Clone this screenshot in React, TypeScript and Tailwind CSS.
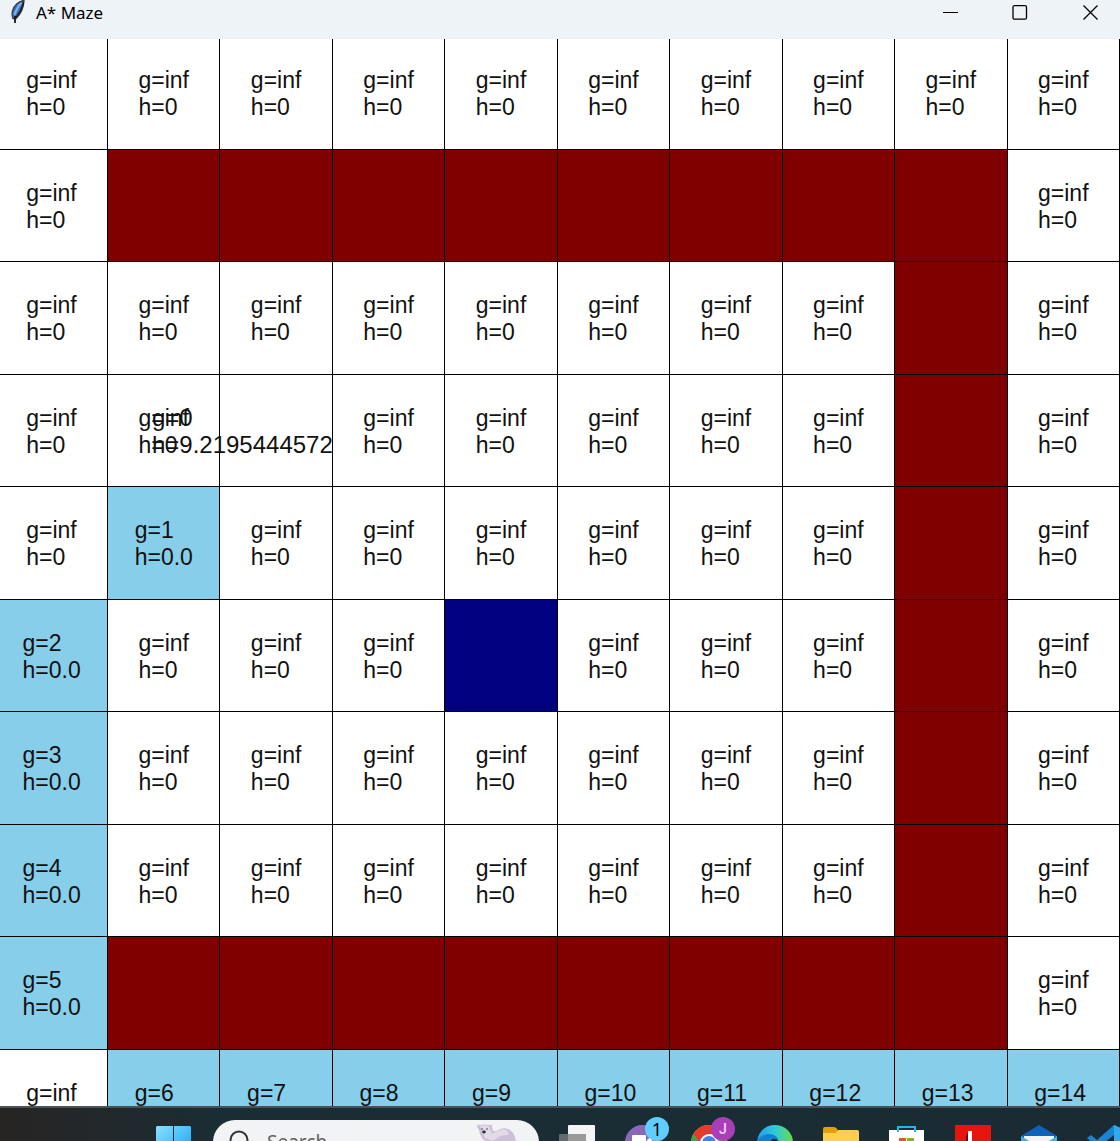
import React from "react";

type Kind = "open" | "wall" | "path" | "goal" | "start" | "blank";
type Cell = { kind: Kind; g?: string };

const layout = [
  ". . . . . . . . . .",
  ". # # # # # # # # .",
  ". . . . . . . . # .",
  ". S _ . . . . . # .",
  ". 1 . . . . . . # .",
  "2 . . . G . . . # .",
  "3 . . . . . . . # .",
  "4 . . . . . . . # .",
  "5 # # # # # # # # .",
  ". 6 7 8 9 10 11 12 13 14",
];

const toCell = (token: string): Cell => {
  if (token === ".") return { kind: "open" };
  if (token === "_") return { kind: "blank" };
  if (token === "#") return { kind: "wall" };
  if (token === "G") return { kind: "goal" };
  if (token === "S") return { kind: "start" };
  return { kind: "path", g: token };
};

const fills: Record<Kind, string> = {
  open: "bg-white",
  start: "bg-white",
  blank: "bg-white",
  wall: "bg-[#800000]",
  path: "bg-[#87ceeb]",
  goal: "bg-[#000080]",
};

function MazeCell({ cell, row, first, last }: { cell: Cell; row: number; first: boolean; last: boolean }) {
  const hasText = cell.kind === "open" || cell.kind === "path" || cell.kind === "start";
  return (
    <div
      className={`relative flex items-start justify-center border-r border-black ${fills[cell.kind]} ${
        row === 0 ? "pt-7" : "pt-[30px]"
      } ${first ? "pr-1" : ""} ${last ? "" : "border-b"}`}
    >
      {hasText && (
        <p className={cell.kind === "path" ? "w-[58px]" : ""}>
          g={cell.g ?? "inf"}
          {!last && (
            <>
              <br />
              h={cell.kind === "path" ? "0.0" : "0"}
            </>
          )}
        </p>
      )}
      {cell.kind === "start" && (
        <p className="absolute left-11 top-[29px] z-10 text-[24px]">
          g=0
          <br />
          h=9.2195444572
        </p>
      )}
    </div>
  );
}

function Feather() {
  return (
    <svg viewBox="0 0 16 24" className="h-6 w-4" aria-hidden="true">
      <path d="M14 .5C9 1 4 5 2.500 11c-.7 3-.5 5 .5 7.500l3 0C11 14 13.500 8 14 .5Z" fill="#3b78c4" stroke="#3a3f47" strokeWidth="1.400" />
      <path d="M11.500 3C8 6 6 10 4.500 15" fill="none" stroke="#7fb4ea" strokeWidth="2" />
      <path d="M13.500 2C12 9 9 14 5.500 18" fill="none" stroke="#1d2126" strokeWidth="1.600" />
      <path d="M5 16v7" fill="none" stroke="#15171a" strokeWidth="1.800" />
    </svg>
  );
}

function TitleBar() {
  return (
    <header className="flex h-[39px] items-start justify-between border-b border-[#f0f0f0] bg-[#eef3f8] pl-[10px] text-black">
      <div className="flex items-start gap-[10px]">
        <Feather />
        <h1 className="font-['Noto_Sans',sans-serif] text-[17px] leading-[26px]">A* Maze</h1>
      </div>
      <div className="flex pr-[21px]">
        <button aria-label="Minimize" className="mr-[53px] h-[26px] w-4">
          <svg viewBox="0 0 16 26" fill="none" stroke="currentColor"><path d="M0 12.500h15" /></svg>
        </button>
        <button aria-label="Maximize" className="mr-[55px] h-[26px] w-4">
          <svg viewBox="0 0 16 26" fill="none" stroke="currentColor" strokeWidth="1.300"><rect x="1" y="5.700" width="13.500" height="13.500" rx="1.500" /></svg>
        </button>
        <button aria-label="Close" className="h-[26px] w-4">
          <svg viewBox="0 0 16 26" fill="none" stroke="currentColor" strokeWidth="1.300"><path d="M.5 5.500l14 14M14.500 5.500l-14 14" /></svg>
        </button>
      </div>
    </header>
  );
}

const icon = "h-9 w-9";

function WindowsIcon() {
  return (
    <svg viewBox="0 0 36 36" className={icon}>
      <defs>
        <linearGradient id="win" x1="0" y1="0" x2="1" y2="1">
          <stop stopColor="#8be0ff" />
          <stop offset="1" stopColor="#0aa0f5" />
        </linearGradient>
      </defs>
      <path d="M1 0h16v17H0V1ZM18 0h16l1 1v16H18ZM0 18h17v17H1ZM18 18h17v17H18Z" fill="url(#win)" />
    </svg>
  );
}

function TaskViewIcon() {
  return (
    <svg viewBox="0 0 36 36" className={icon}>
      <rect x="9" y="0" width="27" height="27" rx="1" fill="#f4f4f4" />
      <rect x="0" y="9" width="27" height="27" rx="1" fill="#666b6d" />
      <rect x="9" y="9" width="18" height="18" fill="#9a9a9a" />
    </svg>
  );
}

function ChatIcon() {
  return (
    <svg viewBox="0 0 36 36" className={icon}>
      <circle cx="18" cy="18" r="18" fill="#8064b8" />
      <path d="M0 18A18 18 0 0 1 18 0a18 18 0 0 1 16 10L8 34A18 18 0 0 1 0 18Z" fill="#8a68b8" />
      <rect x="7" y="10" width="14" height="14" rx="1" fill="#fff" />
      <path d="M22 15l5-4v13l-5-4Z" fill="#fff" />
    </svg>
  );
}

function ChromeIcon() {
  return (
    <svg viewBox="0 0 36 36" className={icon}>
      <circle cx="18" cy="18" r="18" fill="#fbc116" />
      <path d="M2.400 9A18 18 0 0 1 33.600 9H18l-8 13Z" fill="#e33b2e" />
      <path d="M2.400 9A18 18 0 0 0 18 36l8-13-16-1Z" fill="#2da94f" />
      <circle cx="18" cy="18" r="9" fill="#fff" />
      <circle cx="18" cy="18" r="7" fill="#3f83f4" />
    </svg>
  );
}

function EdgeIcon() {
  return (
    <svg viewBox="0 0 36 36" className={icon}>
      <defs>
        <linearGradient id="edge">
          <stop stopColor="#229fe3" />
          <stop offset=".5" stopColor="#32c7dc" />
          <stop offset="1" stopColor="#65df45" />
        </linearGradient>
      </defs>
      <path d="M0 17C1 6 9 0 18 0c10 0 18 8 18 17 0 7-5 10-14 9l-2-9Z" fill="url(#edge)" />
      <path d="M0 18C1 12 7 9 12 9c6 0 10 4 10 9-8-6-12 3-5 16C7 34 0 27 0 18Z" fill="#1182cf" />
      <path d="M13 18c1-5 7-6 9 0v7h-7Z" fill="#172d38" />
    </svg>
  );
}

function FolderIcon() {
  return (
    <svg viewBox="0 0 36 36" className={icon}>
      <path d="M0 4q0-2 2-2h9q2 0 4 3l3 2v8H0Z" fill="#dfa00d" />
      <path d="M0 8h12l4-3h18q2 0 2 2v24H0Z" fill="#ffcf4c" />
    </svg>
  );
}

function StoreIcon() {
  return (
    <svg viewBox="0 0 36 36" className={icon}>
      <path d="M0 5h35v27q0 2-2 2H2q-2 0-2-2Z" fill="#fff" />
      <path d="M9 7V2h17v5" fill="none" stroke="#27b5ed" strokeWidth="2" />
      <path d="M10 13h7v7h-7Z" fill="#f25022" />
      <path d="M18 13h7v7h-7Z" fill="#7fba00" />
      <path d="M10 21h7v7h-7Z" fill="#00a4ef" />
      <path d="M18 21h7v7h-7Z" fill="#ffb900" />
    </svg>
  );
}

function RedIcon() {
  return (
    <svg viewBox="0 0 36 36" className={icon}>
      <path d="M0 0h36v36H0Z" fill="#e6150d" />
      <path d="M11 12l2-5v22h-2Z" fill="#6d0a06" />
      <path d="M13 6h4v18h7v4H13Z" fill="#fff" />
    </svg>
  );
}

function MailIcon() {
  return (
    <svg viewBox="0 0 36 36" className={icon}>
      <path d="M0 11L18 0l18 11v23H0Z" fill="#0f62ba" />
      <path d="M3 11h30v13H3Z" fill="#f4f4f4" />
      <path d="M0 11l18 11 18-11v23H0Z" fill="#36b6ef" />
    </svg>
  );
}

function CodeIcon() {
  return (
    <svg viewBox="0 0 36 36" className={icon}>
      <path d="M27 0L10 15 4 10l-4 3 22 20 5 3 9-4V4Z" fill="#1686d2" />
      <path d="M27 10v16l-10-8Z" fill="#182d37" />
      <path d="M27 0l9 4v28l-9 4Z" fill="#36a8ed" />
    </svg>
  );
}

function Bear() {
  return (
    <svg viewBox="0 0 40 36" className="h-9 w-10 shrink-0" aria-hidden="true">
      <path d="M0 3Q0 0 3 1q5-1 9 0 4-1 3 2l1 4 3 0q8-5 14-1 6 4 6 14v12H8V17Q3 13 2 6Z" fill="#cdbfd8" />
      <path d="M3 2q5-1 9 0l3 8q8-6 15-4l2 5q-9-1-16 6l-8-3Z" fill="#e3dae9" />
      <circle cx="5" cy="5" r=".8" fill="#40394b" />
      <circle cx="10" cy="5" r=".8" fill="#40394b" />
      <ellipse cx="7" cy="8" rx="1.800" ry="1.400" fill="#302c39" />
    </svg>
  );
}

type AppEntry = { name: string; Icon: () => React.JSX.Element; badge?: string; tint?: string };
const apps: AppEntry[] = [
  { name: "Task view", Icon: TaskViewIcon },
  { name: "Chat", Icon: ChatIcon, badge: "1", tint: "bg-[#60cdff] text-black text-[18px]" },
  { name: "Chrome", Icon: ChromeIcon, badge: "J", tint: "bg-[#a93fb8] text-[#eed5f2] text-[14px] font-['Roboto',sans-serif] font-medium" },
  { name: "Edge", Icon: EdgeIcon },
  { name: "File Explorer", Icon: FolderIcon },
  { name: "Microsoft Store", Icon: StoreIcon },
  { name: "Reader", Icon: RedIcon },
  { name: "Mail", Icon: MailIcon },
  { name: "Code", Icon: CodeIcon },
];

function Taskbar() {
  return (
    <nav className="flex h-[35px] items-start overflow-hidden border-t-2 border-[#4b5256] bg-linear-to-r from-[#272423] via-[#1a2d35] via-20% to-[#1a2b33] pl-[156px] font-['Noto_Sans',sans-serif]">
      <button aria-label="Start" className="mt-[18px] shrink-0">
        <WindowsIcon />
      </button>
      <label className="ml-[21px] mr-5 mt-3 flex h-11 w-[326px] shrink-0 items-center rounded-full bg-[#f2f3f4] pl-4 pr-[22px]">
        <svg viewBox="0 0 24 24" className="mr-[14px] h-6 w-6 shrink-0" fill="none" stroke="#333" strokeWidth="2" aria-hidden="true">
          <circle cx="10" cy="10" r="8.500" />
          <path d="M5 17l-4 5" />
        </svg>
        <input
          type="text"
          aria-label="Search"
          placeholder="Search"
          className="min-w-0 flex-1 bg-transparent text-[19px] outline-none placeholder:text-[#636363]"
        />
        <Bear />
      </label>
      <div className="flex gap-[30px]">
        {apps.map(({ name, Icon, badge, tint }) => (
          <button key={name} aria-label={name} className="relative mt-[17px] shrink-0">
            <Icon />
            {badge && (
              <span className={`absolute -top-2 left-5 flex h-6 w-6 items-center justify-center rounded-full leading-6 ${tint}`}>
                {badge}
              </span>
            )}
          </button>
        ))}
      </div>
    </nav>
  );
}

export default function App() {
  return (
    <div className="overflow-hidden bg-white">
      <TitleBar />
      <main className="grid grid-cols-[216fr_repeat(9,225fr)] grid-rows-[111px_repeat(4,112px_113px)_56px] overflow-hidden font-['Liberation_Sans',Arial,sans-serif] text-[23px] leading-[27px] text-[#111]">
        {layout.map((row, r) =>
          row.split(" ").map((token, c) => (
            <MazeCell key={`${r}-${c}`} cell={toCell(token)} row={r} first={c === 0} last={r === layout.length - 1} />
          ))
        )}
      </main>
      <Taskbar />
    </div>
  );
}
